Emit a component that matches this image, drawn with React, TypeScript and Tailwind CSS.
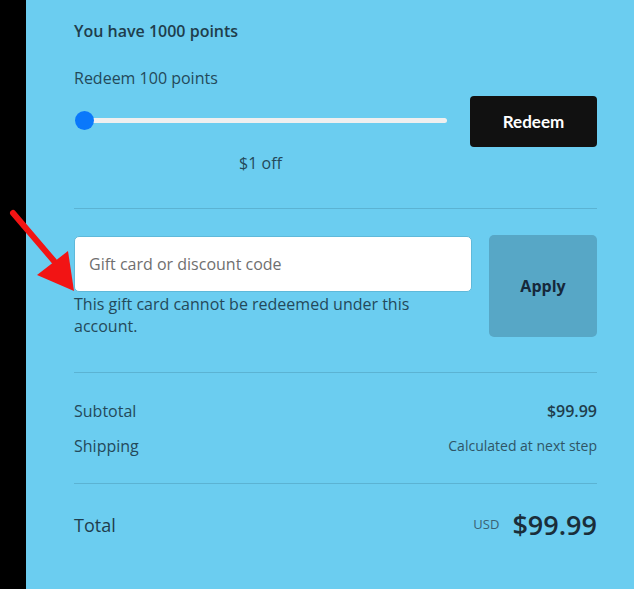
import React from "react";

export default function App() {
  return (
    <div className="relative flex w-[634px] h-[589px] overflow-hidden" style={{ fontFamily: '"Open Sans", "Noto Sans", sans-serif' }}>
      <div className="w-[26px] shrink-0 bg-black" />
      <div className="flex-1 bg-[#6bcdf0] pl-[48px] pr-[37px] text-[#1f3d4c]">
        {/* points */}
        <div className="pt-[20px] text-[16px] font-semibold leading-[22px]">You have 1000 points</div>
        <div className="mt-[25px] text-[16px] leading-[22px] text-[#24495a]">Redeem 100 points</div>
        <div className="mt-[7px] flex items-start gap-[23px]">
          <div className="flex w-[373px] flex-col">
            <div className="relative mt-[22px] h-[5px] w-full">
              <div className="absolute left-[11px] right-0 top-0 h-[5px] rounded-full bg-[#efefef]" />
              <div className="absolute left-[1px] top-[-7px] h-[19px] w-[19px] rounded-full bg-[#0a78fb]" />
            </div>
            <div className="mt-[29px] text-center text-[16px] leading-[22px] text-[#24495a]">$1 off</div>
          </div>
          <button className="h-[51px] w-[127px] rounded-[4px] bg-[#111111] text-[17px] font-bold text-white" style={{ fontFamily: 'Lato, sans-serif' }}>
            Redeem
          </button>
        </div>
        <div className="mt-[34px] h-px bg-[#5bb3d3]" />
        {/* code */}
        <div className="mt-[26px] flex gap-[17px]">
          <div className="flex w-[398px] flex-col">
            <div className="mt-[1px] flex h-[56px] items-center rounded-[5px] border border-[#5fb9da] bg-white px-[14px] text-[16px] text-[#6f6f6f]">
              Gift card or discount code
            </div>
            <div className="mt-[1px] text-[16px] leading-[22px] text-[#24495a]">
              This gift card cannot be redeemed under this account.
            </div>
          </div>
          <button className="h-[102px] flex-1 rounded-[5px] bg-[#57a7c6] text-[16px] font-bold text-[#16283a]">
            Apply
          </button>
        </div>
        <div className="mt-[35px] h-px bg-[#5bb3d3]" />
        {/* totals */}
        <div className="mt-[27px] flex items-center justify-between text-[16px] leading-[22px]">
          <span className="text-[#24495a]">Subtotal</span>
          <span className="text-[16px] font-semibold text-[#1f3d4c]">$99.99</span>
        </div>
        <div className="mt-[13px] flex items-center justify-between text-[16px] leading-[22px]">
          <span className="text-[#24495a]">Shipping</span>
          <span className="text-[14px] text-[#2f5566]">Calculated at next step</span>
        </div>
        <div className="mt-[26px] h-px bg-[#5bb3d3]" />
        <div className="mt-[23px] flex h-[36px] items-center justify-between">
          <span className="text-[18px] text-[#1f3d4c]">Total</span>
          <div className="flex items-center gap-[13px]">
            <span className="text-[13px] text-[#3a6274]">USD</span>
            <span className="text-[27px] font-semibold text-[#1a2e3a]">$99.99</span>
          </div>
        </div>
      </div>
      <svg className="pointer-events-none absolute left-0 top-0" width="120" height="320" viewBox="0 0 120 320">
        <line x1="13" y1="213" x2="54" y2="261" stroke="#f21414" strokeWidth="6" strokeLinecap="round" />
        <polygon points="37,275 68,251 74,291" fill="#f21414" />
      </svg>
    </div>
  );
}
